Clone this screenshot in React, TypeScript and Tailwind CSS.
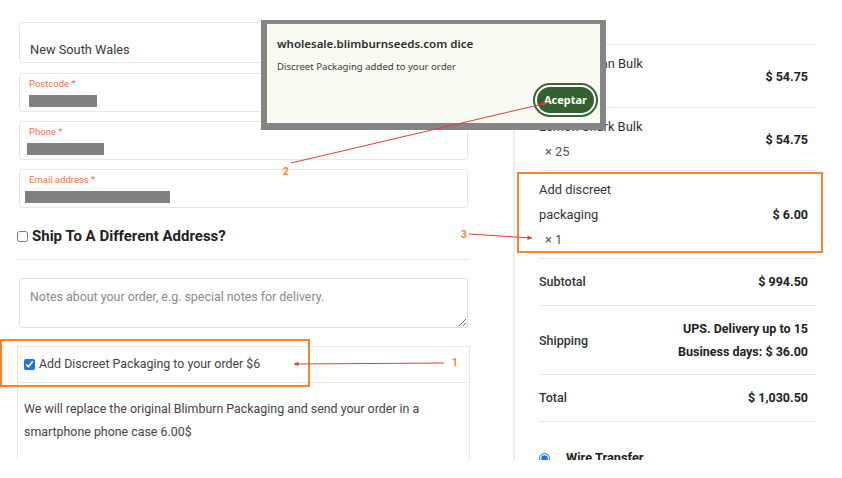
import React from 'react';

const rows = [
  { name: 'Black Afghan Bulk', qty: '× 25', price: '$ 54.75' },
  { name: 'Lemon Shark Bulk', qty: '× 25', price: '$ 54.75' },
  { name: 'Add discreet packaging', qty: '× 1', price: '$ 6.00' },
];

function Field({ label, bar, barClass }: { label: string; bar: number; barClass: string }) {
  return (
    <div className="mx-[2px] h-[39px] rounded-[3px] border border-[#e6e6e6] pl-[9px] pt-[3px]">
      <div className="text-[9.5px] leading-[13px] text-[#f2714b]">{label} *</div>
      <div className={`h-[12px] bg-[#808080] ${barClass}`} style={{ width: bar }} />
    </div>
  );
}

function Arrow({ x1, y1, x2, y2 }: { x1: number; y1: number; x2: number; y2: number }) {
  const a = Math.atan2(y2 - y1, x2 - x1);
  const l = 5;
  const p1 = `${x2 - l * Math.cos(a - 0.45)},${y2 - l * Math.sin(a - 0.45)}`;
  const p2 = `${x2 - l * Math.cos(a + 0.45)},${y2 - l * Math.sin(a + 0.45)}`;
  return (
    <g>
      <line x1={x1} y1={y1} x2={x2} y2={y2} stroke="#e23b3b" strokeWidth="1" />
      <polygon points={`${x2},${y2} ${p1} ${p2}`} fill="#e23b3b" />
    </g>
  );
}

export default function App() {
  return (
    <div className="relative w-[842px] h-[478px] overflow-hidden bg-white font-['Roboto',sans-serif]">
      <div className="flex h-[460px] overflow-hidden">
        {/* left column: billing form */}
        <div className="ml-[17px] w-[453px] shrink-0 pt-[22px]">
          <div className="mx-[2px] h-[41px] rounded-[3px] border border-[#e6e6e6] pl-[10px] pt-[17px] text-[12.8px] leading-5 text-[#3a3a3a]">
            New South Wales
          </div>
          <div className="mt-[10px]">
            <Field label="Postcode" bar={68} barClass="mt-[5px] h-[11px]" />
          </div>
          <div className="mt-[9px]">
            <Field label="Phone" bar={77} barClass="mt-[5px] -ml-[2px]" />
          </div>
          <div className="mt-[9px]">
            <Field label="Email address" bar={145} barClass="mt-[5px] -ml-[4px]" />
          </div>

          <div className="mt-[16px] flex h-[24px] items-center gap-[4px]">
            <input type="checkbox" className="h-[11px] w-[11px]" readOnly />
            <span className="text-[15px] font-bold text-[#222]">Ship To A Different Address?</span>
          </div>
          <div className="mt-[11px] h-px bg-[#e8e8e8]" />

          <textarea
            className="mx-[2px] mt-[18px] block h-[50px] w-[449px] rounded-[3px] border border-[#e0e0e0] px-[10px] pt-[8px] text-[12.4px] leading-5 placeholder:text-[#8a8a8a]"
            placeholder="Notes about your order, e.g. special notes for delivery."
          />

          <div className="mt-[18px] border border-[#e6e6e6]">
            <div className="flex h-[36px] items-center gap-[4px] border-b border-[#e6e6e6] pl-[6px]">
              <input type="checkbox" checked readOnly className="h-[11px] w-[11px] accent-[#1a73e8]" />
              <span className="text-[12.4px] text-[#444]">Add Discreet Packaging to your order $6</span>
            </div>
            <p className="px-[6px] pt-[14px] text-[12.4px] leading-[23px] text-[#444]">
              We will replace the original Blimburn Packaging and send your order in a smartphone phone case 6.00$
            </p>
            <div className="h-[60px]" />
          </div>
        </div>

        {/* right column: order review */}
        <div className="ml-[43px] mt-[30px] w-[303px] shrink-0 border-l-2 border-[#ececec] pl-[24px] pt-[14px]">
          <div className="w-[277px]">
            {rows.map(r => (
              <div key={r.name} className="flex items-center justify-between border-t border-[#e9e9e9] pt-[6px] pb-[6px] leading-[25px]">
                <div className="w-[122px] text-[12.9px]">
                  <div className="text-[#333]">{r.name}</div>
                  <div className="pl-[6px] text-[#555]">{r.qty}</div>
                </div>
                <div className="pr-[8px] text-[12.5px] font-bold text-[#222]">{r.price}</div>
              </div>
            ))}
            <div className="flex items-center justify-between border-t border-[#e9e9e9] py-[11px] text-[12.5px] leading-6">
              <span className="font-medium text-[#333]">Subtotal</span>
              <span className="pr-[8px] font-bold text-[#222]">$ 994.50</span>
            </div>
            <div className="flex items-center justify-between border-t border-[#e9e9e9] py-[11px] text-[12.5px] leading-[23px]">
              <span className="font-medium text-[#333]">Shipping</span>
              <span className="pr-[8px] text-right font-bold text-[#222]">
                UPS. Delivery up to 15
                <br />
                Business days: $ 36.00
              </span>
            </div>
            <div className="flex items-center justify-between border-y border-[#e9e9e9] py-[11px] text-[12.5px] leading-6">
              <span className="font-medium text-[#333]">Total</span>
              <span className="pr-[8px] font-bold text-[#222]">$ 1,030.50</span>
            </div>
            <div className="flex items-center gap-[16px] pt-[28px] text-[12.8px] leading-4">
              <input type="radio" checked readOnly className="h-[11px] w-[11px] accent-[#1a73e8]" />
              <span className="font-bold text-[#222]">Wire Transfer</span>
            </div>
          </div>
        </div>
      </div>

      {/* browser alert */}
      <div className="absolute left-[261px] top-[20px] h-[110px] w-[345px] border-x-[6px] border-t-[4px] border-b-[7px] border-[#858585] bg-[#f9fbf2] pl-[10px] pt-[11px] font-['Noto_Sans',sans-serif]">
        <div className="text-[11.5px] font-semibold leading-[18px] text-[#2b2b2b]">wholesale.blimburnseeds.com dice</div>
        <div className="mt-[6px] text-[9.6px] leading-4 text-[#3a3a3a]">Discreet Packaging added to your order</div>
        <div className="mt-[8px] flex justify-end pr-[2px]">
          <div className="flex h-[34px] w-[65px] items-center justify-center rounded-full border-2 border-[#3a6436] bg-white p-[2px]">
            <div className="flex h-full w-full items-center justify-center rounded-full bg-[#356030] text-[11px] font-bold text-white">
              Aceptar
            </div>
          </div>
        </div>
      </div>

      {/* annotations */}
      <div className="absolute left-0 top-[339px] h-[48px] w-[310px] border-2 border-[#f5842a]" />
      <div className="absolute left-[517px] top-[172px] h-[81px] w-[306px] border-2 border-[#f5842a]" />
      <svg className="pointer-events-none absolute left-0 top-0" width="842" height="478">
        <Arrow x1={444} y1={363} x2={294} y2={364} />
        <Arrow x1={291} y1={163} x2={547} y2={103} />
        <Arrow x1={469} y1={234} x2={532} y2={238} />
      </svg>
      <span className="absolute left-[452px] top-[357px] text-[10px] font-bold leading-3 text-[#f5842a]">1</span>
      <span className="absolute left-[283px] top-[166px] text-[10px] font-bold leading-3 text-[#f5842a]">2</span>
      <span className="absolute left-[461px] top-[229px] text-[10px] font-bold leading-3 text-[#f5842a]">3</span>
    </div>
  );
}
